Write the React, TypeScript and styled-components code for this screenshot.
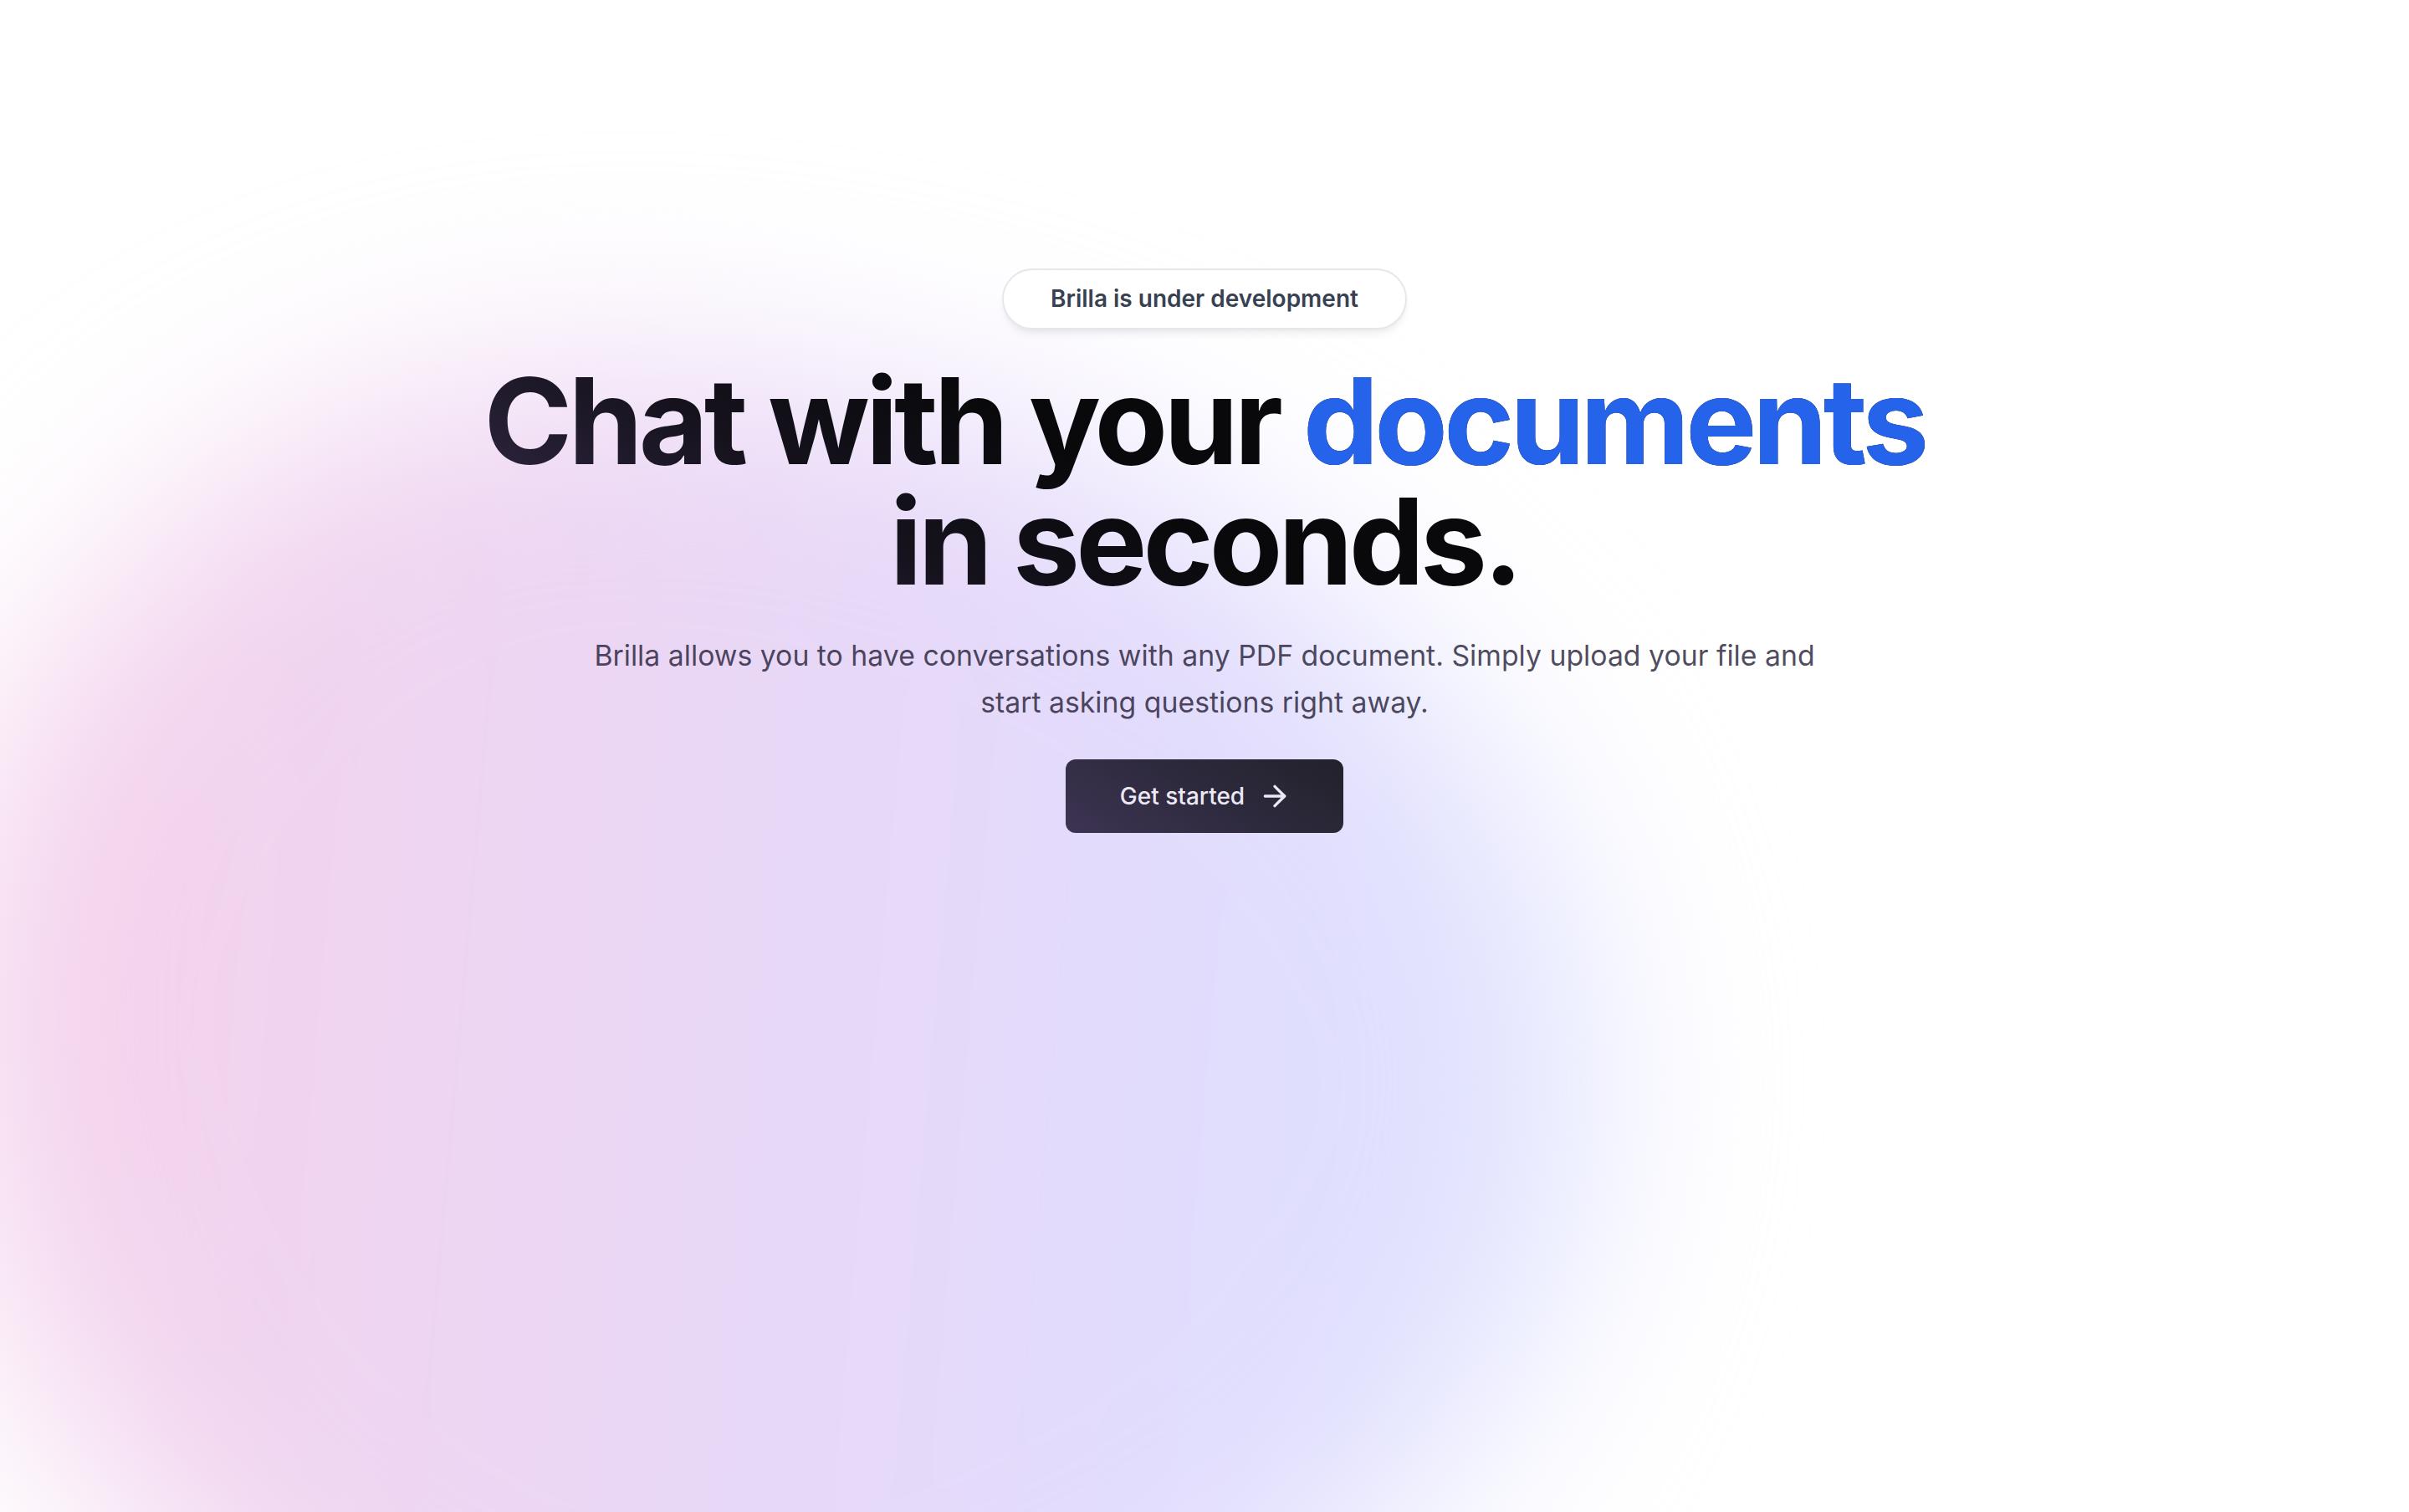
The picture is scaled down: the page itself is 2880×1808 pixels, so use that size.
import React from 'react';
import styled, { createGlobalStyle } from 'styled-components';
import { ArrowRight } from 'lucide-react';

const GlobalStyle = createGlobalStyle`
  html,
  body {
    margin: 0;
    padding: 0;
    background: #ffffff;
  }

  body {
    font-family: Inter, "Noto Sans", "Liberation Sans", sans-serif;
    -webkit-font-smoothing: antialiased;
  }
`;

const StyledPage = styled.div`
  min-height: 100vh;
  overflow: hidden;
  position: relative;
`;

// the soft pink / lavender glow that sits behind the hero
const StyledGlow = styled.div`
  background: linear-gradient(
    95deg,
    #f6d0ea 0%,
    #f0d5f0 25%,
    #e8d8f8 52%,
    #e2dcfd 72%,
    #dfe1fe 90%
  );
  border-radius: 40% 60% 55% 45% / 45% 50% 50% 55%;
  filter: blur(120px);
  height: 1700px;
  left: -60px;
  pointer-events: none;
  position: absolute;
  top: 440px;
  width: 1960px;
  z-index: 0;
`;

const StyledHero = styled.main`
  align-items: center;
  display: flex;
  flex-direction: column;
  padding-top: 321px;
  position: relative;
  z-index: 1;
`;

const StyledBadge = styled.div`
  background: #ffffff;
  border: 2px solid #e5e7eb;
  border-radius: 9999px;
  box-shadow: 0 8px 12px -4px rgba(17, 24, 39, 0.08),
    0 3px 6px -3px rgba(17, 24, 39, 0.06);
  box-sizing: border-box;
  color: #374151;
  font-size: 28px;
  font-weight: 600;
  height: 73px;
  line-height: 40px;
  padding: 14px 56px;
`;

const StyledHeading = styled.h1`
  background: linear-gradient(32deg, #3b2f52 0%, #15121c 28%, #09090b 45%);
  -webkit-background-clip: text;
  background-clip: text;
  color: transparent;
  font-size: 143px;
  font-weight: 700;
  letter-spacing: -0.034em;
  line-height: 144px;
  margin: 37px 0 0;
  text-align: center;
`;

const StyledAccent = styled.span`
  color: #2563eb;
  -webkit-text-fill-color: #2563eb;
`;

const StyledLead = styled.p`
  color: rgba(34, 26, 52, 0.8);
  font-size: 33.8px;
  line-height: 56px;
  margin: 37px 0 0;
  max-width: 1490px;
  text-align: center;
`;

const StyledButton = styled.a`
  align-items: center;
  background: linear-gradient(30deg, #3d3453 0%, #2e2a3e 50%, #23212b 100%);
  border-radius: 12px;
  box-sizing: border-box;
  color: #ece9f5;
  cursor: pointer;
  display: flex;
  font-size: 28px;
  font-weight: 500;
  gap: 16px;
  height: 88px;
  margin-top: 40px;
  padding: 0 62px 0 65px;
  text-decoration: none;
`;

export default function App(): JSX.Element {
  return (
    <StyledPage>
      <GlobalStyle />
      <StyledGlow />
      <StyledHero>
        <StyledBadge>Brilla is under development</StyledBadge>
        <StyledHeading>
          Chat with your <StyledAccent>documents</StyledAccent>
          <br />
          in seconds.
        </StyledHeading>
        <StyledLead>
          Brilla allows you to have conversations with any PDF document. Simply
          upload your file and start asking questions right away.
        </StyledLead>
        <StyledButton href="#">
          Get started
          <ArrowRight size={40} strokeWidth={2} />
        </StyledButton>
      </StyledHero>
    </StyledPage>
  );
}
